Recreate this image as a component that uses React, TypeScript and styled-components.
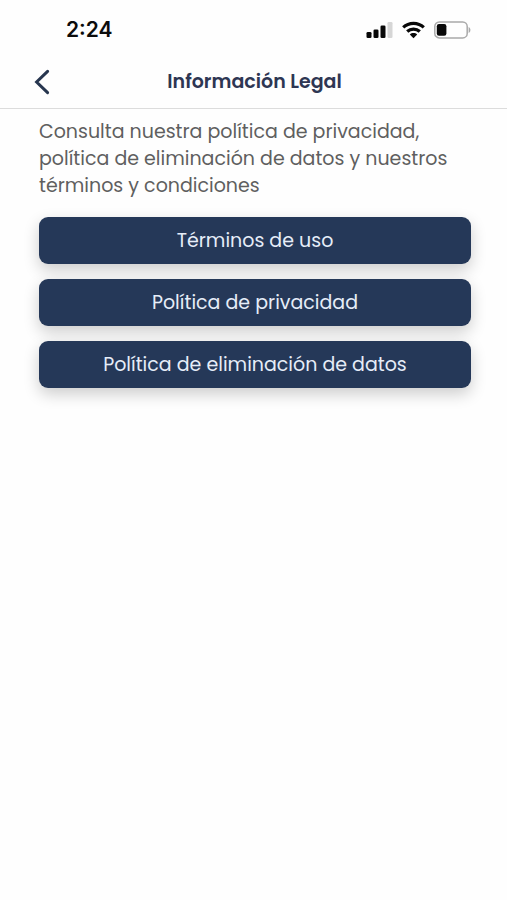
import React from "react";
import styled, { createGlobalStyle } from "styled-components";

const GlobalStyle = createGlobalStyle`
  * {
    box-sizing: border-box;
  }
  body {
    margin: 0;
    background: #fefefe;
    font-family: Poppins, Inter, sans-serif;
  }
`;

const Screen = styled.div`
  min-height: 100vh;
  background: #fefefe;
`;

const StatusBar = styled.div`
  display: flex;
  align-items: center;
  justify-content: space-between;
  height: 56px;
  padding: 4px 36px 0 66px;
`;

const Clock = styled.time`
  color: #0c0c0c;
  font-family: Inter, sans-serif;
  font-size: 21px;
  font-weight: 600;
  line-height: 24px;
`;

const StatusIcons = styled.div`
  display: flex;
  align-items: center;
  gap: 9px;

  svg {
    display: block;
  }
`;

const Header = styled.header`
  display: grid;
  grid-template-columns: 32px 1fr 32px;
  align-items: center;
  height: 53px;
  padding: 0 24px 0 26px;
  border-bottom: 1px solid #dcdcdc;
`;

const BackButton = styled.button`
  display: flex;
  align-items: center;
  justify-content: center;
  width: 32px;
  height: 32px;
  padding: 0;
  border: 0;
  background: transparent;
  color: #27364f;
  cursor: pointer;
`;

const Title = styled.h1`
  margin: 0;
  color: #2e3653;
  font-size: 19px;
  font-weight: 600;
  line-height: 28px;
  text-align: center;
`;

const Content = styled.main`
  padding: 9px 36px 24px 39px;
`;

const Intro = styled.p`
  margin: 0;
  color: #5f5f60;
  font-size: 19px;
  line-height: 27px;
`;

const Actions = styled.div`
  display: grid;
  gap: 15px;
  margin-top: 18px;
`;

const ActionButton = styled.button`
  height: 47px;
  padding: 0 16px;
  border: 0;
  border-radius: 9px;
  background: #253858;
  box-shadow: 0 6px 16px rgba(0, 0, 0, 0.2);
  color: #e6edf8;
  font-family: inherit;
  font-size: 19px;
  font-weight: 400;
  line-height: 27px;
  cursor: pointer;
`;

const documents = [
  "Términos de uso",
  "Política de privacidad",
  "Política de eliminación de datos",
];

function SignalIcon() {
  return (
    <svg width="27" height="18" viewBox="0 0 27 18" aria-hidden="true">
      <rect x="0.5" y="11" width="5" height="6" rx="1.3" fill="#080808" />
      <rect x="7.5" y="8.5" width="5" height="8.5" rx="1.3" fill="#080808" />
      <rect x="14.5" y="4.5" width="5" height="12.5" rx="1.3" fill="#080808" />
      <rect x="21.5" y="1" width="5" height="16" rx="1.3" fill="#d6d6d6" />
    </svg>
  );
}

function WifiIcon() {
  return (
    <svg width="23" height="18" viewBox="0 0 23 18" aria-hidden="true">
      <g fill="none" stroke="#080808" strokeWidth="3.2">
        <path d="M1.2 6.4C7 .9 16 .9 21.8 6.4" />
        <path d="M5.2 10.5c3.6-3.3 9-3.3 12.6 0" />
      </g>
      <path d="M11.5 17.2l-3.7-3.7c2.1-1.9 5.3-1.9 7.4 0z" fill="#080808" />
    </svg>
  );
}

function BatteryIcon() {
  return (
    <svg width="37" height="18" viewBox="0 0 37 18" aria-hidden="true">
      <rect x="0.8" y="0.9" width="32.4" height="16" rx="4.5" fill="none" stroke="#a9a9a9" strokeWidth="1.5" />
      <rect x="2.8" y="3" width="9.6" height="11.8" rx="2.2" fill="#080808" />
      <path d="M34.6 6v6c2.4-1 2.4-5 0-6z" fill="#a9a9a9" />
    </svg>
  );
}

function ChevronLeft() {
  return (
    <svg width="18" height="28" viewBox="0 0 18 28" aria-hidden="true">
      <path
        d="M14.6 3.3L3.6 14l11 10.7"
        fill="none"
        stroke="currentColor"
        strokeWidth="3"
        strokeLinecap="round"
        strokeLinejoin="miter"
      />
    </svg>
  );
}

export default function App() {
  return (
    <Screen>
      <GlobalStyle />
      <StatusBar>
        <Clock>2:24</Clock>
        <StatusIcons>
          <SignalIcon />
          <WifiIcon />
          <BatteryIcon />
        </StatusIcons>
      </StatusBar>
      <Header>
        <BackButton type="button" aria-label="Volver">
          <ChevronLeft />
        </BackButton>
        <Title>Información Legal</Title>
      </Header>
      <Content>
        <Intro>
          Consulta nuestra política de privacidad, política de eliminación de datos y nuestros
          términos y condiciones
        </Intro>
        <Actions>
          {documents.map((label) => (
            <ActionButton key={label} type="button">
              {label}
            </ActionButton>
          ))}
        </Actions>
      </Content>
    </Screen>
  );
}
